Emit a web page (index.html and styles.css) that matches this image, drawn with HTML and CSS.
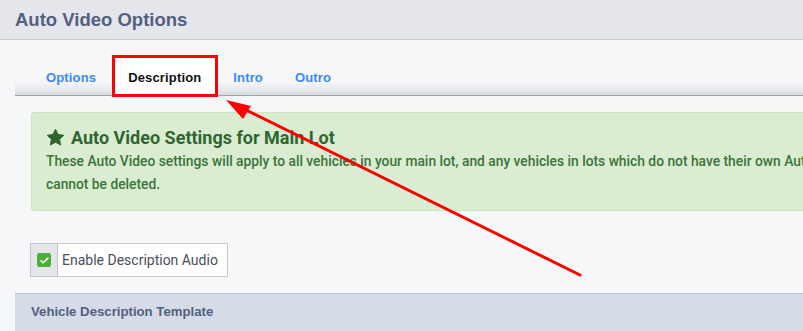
FILE: index.html
```html
<!DOCTYPE html>
<html>
<head>
<meta charset="utf-8">
<link rel="stylesheet" href="styles.css">
</head>
<body>
<header class="page-head">
  <h1 class="page-title">Auto Video Options</h1>
</header>
<main class="content">
  <nav class="tabs">
    <a class="tab">Options</a>
    <a class="tab active">Description</a>
    <a class="tab">Intro</a>
    <a class="tab">Outro</a>
  </nav>
  <div class="inner">
    <div class="alert">
      <h2 class="alert-title">
        <svg class="star" viewBox="0 0 24 24" width="19" height="19"><path d="M12 1.5l3.2 6.6 7.3 1.1-5.3 5.1 1.3 7.3L12 18.1l-6.5 3.5 1.3-7.3-5.3-5.1 7.3-1.1z" fill="currentColor" stroke="currentColor" stroke-width="1.2" stroke-linejoin="round"/></svg>
        Auto Video Settings for Main Lot
      </h2>
      <p class="alert-text"><span class="line">These Auto Video settings will apply to all vehicles in your main lot, and any vehicles in lots which do not have their own Auto Video settings. These settings</span><br>cannot be deleted.</p>
    </div>
    <label class="check-group">
      <span class="check-addon"><span class="checkbox"><svg viewBox="0 0 16 16" width="11" height="11"><path d="M3 8.3l3.1 3L13 4.6" fill="none" stroke="#fff" stroke-width="2.2" stroke-linecap="round" stroke-linejoin="round"/></svg></span></span>
      <span class="check-label">Enable Description Audio</span>
    </label>
  </div>
  <section class="panel-head">Vehicle Description Template</section>
</main>
<svg class="annot" width="803" height="331" viewBox="0 0 803 331">
  <rect x="113.5" y="56.5" width="103" height="39" fill="none" stroke="#ff0000" stroke-width="3"/>
  <line x1="580" y1="275" x2="240" y2="107" stroke="#ff0000" stroke-width="3" stroke-linecap="round"/>
  <polygon points="226,100 251,106 243,119" fill="#ff0000"/>
</svg>
</body>
</html>
```
FILE: styles.css
```css
html, body {
  margin: 0;
  padding: 0;
}
body {
  width: 803px;
  height: 331px;
  overflow: hidden;
  background: #f6f7f9;
  font-family: "Liberation Sans", Arial, sans-serif;
  position: relative;
}
.page-head {
  height: 40px;
  background: #e4e6eb;
  border-bottom: 1px solid #c6cad3;
  box-sizing: border-box;
  display: flex;
  align-items: center;
  padding-left: 15px;
}
.page-title {
  margin: 0;
  font-size: 18.5px;
  font-weight: bold;
  color: #53607f;
}
.content {
  padding-left: 15px;
}
.tabs {
  margin-top: 16px;
  height: 40px;
  box-sizing: border-box;
  padding-left: 15px;
  display: flex;
  background: linear-gradient(to bottom, #f6f7f9 0%, #f6f7f9 65%, #e9eaee 85%, #d7d9df 100%);
  border-bottom: 1px solid #9ea5b1;
}
.tab {
  display: flex;
  align-items: center;
  padding: 3px 16px 0;
  font-size: 13px;
  font-weight: bold;
  letter-spacing: 0.15px;
  color: #3a88f2;
}
.tab.active {
  background: #ffffff;
  color: #111111;
}
.inner {
  padding: 16px 0 0 16px;
}
.alert {
  height: 99px;
  box-sizing: border-box;
  margin-right: -20px;
  background: #dbedd1;
  border: 1px solid #cce4bf;
  border-radius: 3px;
  padding: 14px 0 0 14px;
  font-family: Roboto, "Liberation Sans", sans-serif;
  color: #336d33;
  overflow: hidden;
}
.alert-title {
  margin: 0;
  display: flex;
  align-items: center;
  gap: 6px;
  font-size: 18px;
  font-weight: bold;
  color: #2f6630;
  line-height: 22px;
  white-space: nowrap;
}
.star {
  margin-top: -1px;
}
.alert-text {
  margin: 1px 0 0 0;
  font-size: 13.8px;
  line-height: 23px;
  font-weight: 500;
  color: #3a743a;
  white-space: nowrap;
}
.check-group {
  margin-top: 32px;
  margin-left: -1px;
  display: inline-flex;
  height: 34px;
  box-sizing: border-box;
  border: 1px solid #c4c7cd;
  background: #ffffff;
}
.check-addon {
  width: 26px;
  background: #e4e6ea;
  border-right: 1px solid #c4c7cd;
  display: flex;
  align-items: center;
  justify-content: center;
}
.checkbox {
  width: 14px;
  height: 14px;
  border-radius: 2px;
  background: #4caf3c;
  display: flex;
  align-items: center;
  justify-content: center;
}
.check-label {
  display: flex;
  align-items: center;
  padding: 0 9px 0 4px;
  font-family: Roboto, "Liberation Sans", sans-serif;
  font-size: 14px;
  color: #4a5059;
}
.panel-head {
  margin-top: 16px;
  height: 40px;
  box-sizing: border-box;
  background: #d5dce8;
  border-top: 1px solid #bcc4d1;
  padding: 0 0 4px 16px;
  display: flex;
  align-items: center;
  font-size: 13.2px;
  font-weight: bold;
  color: #53607f;
}
.annot {
  position: absolute;
  left: 0;
  top: 0;
  pointer-events: none;
}
```
